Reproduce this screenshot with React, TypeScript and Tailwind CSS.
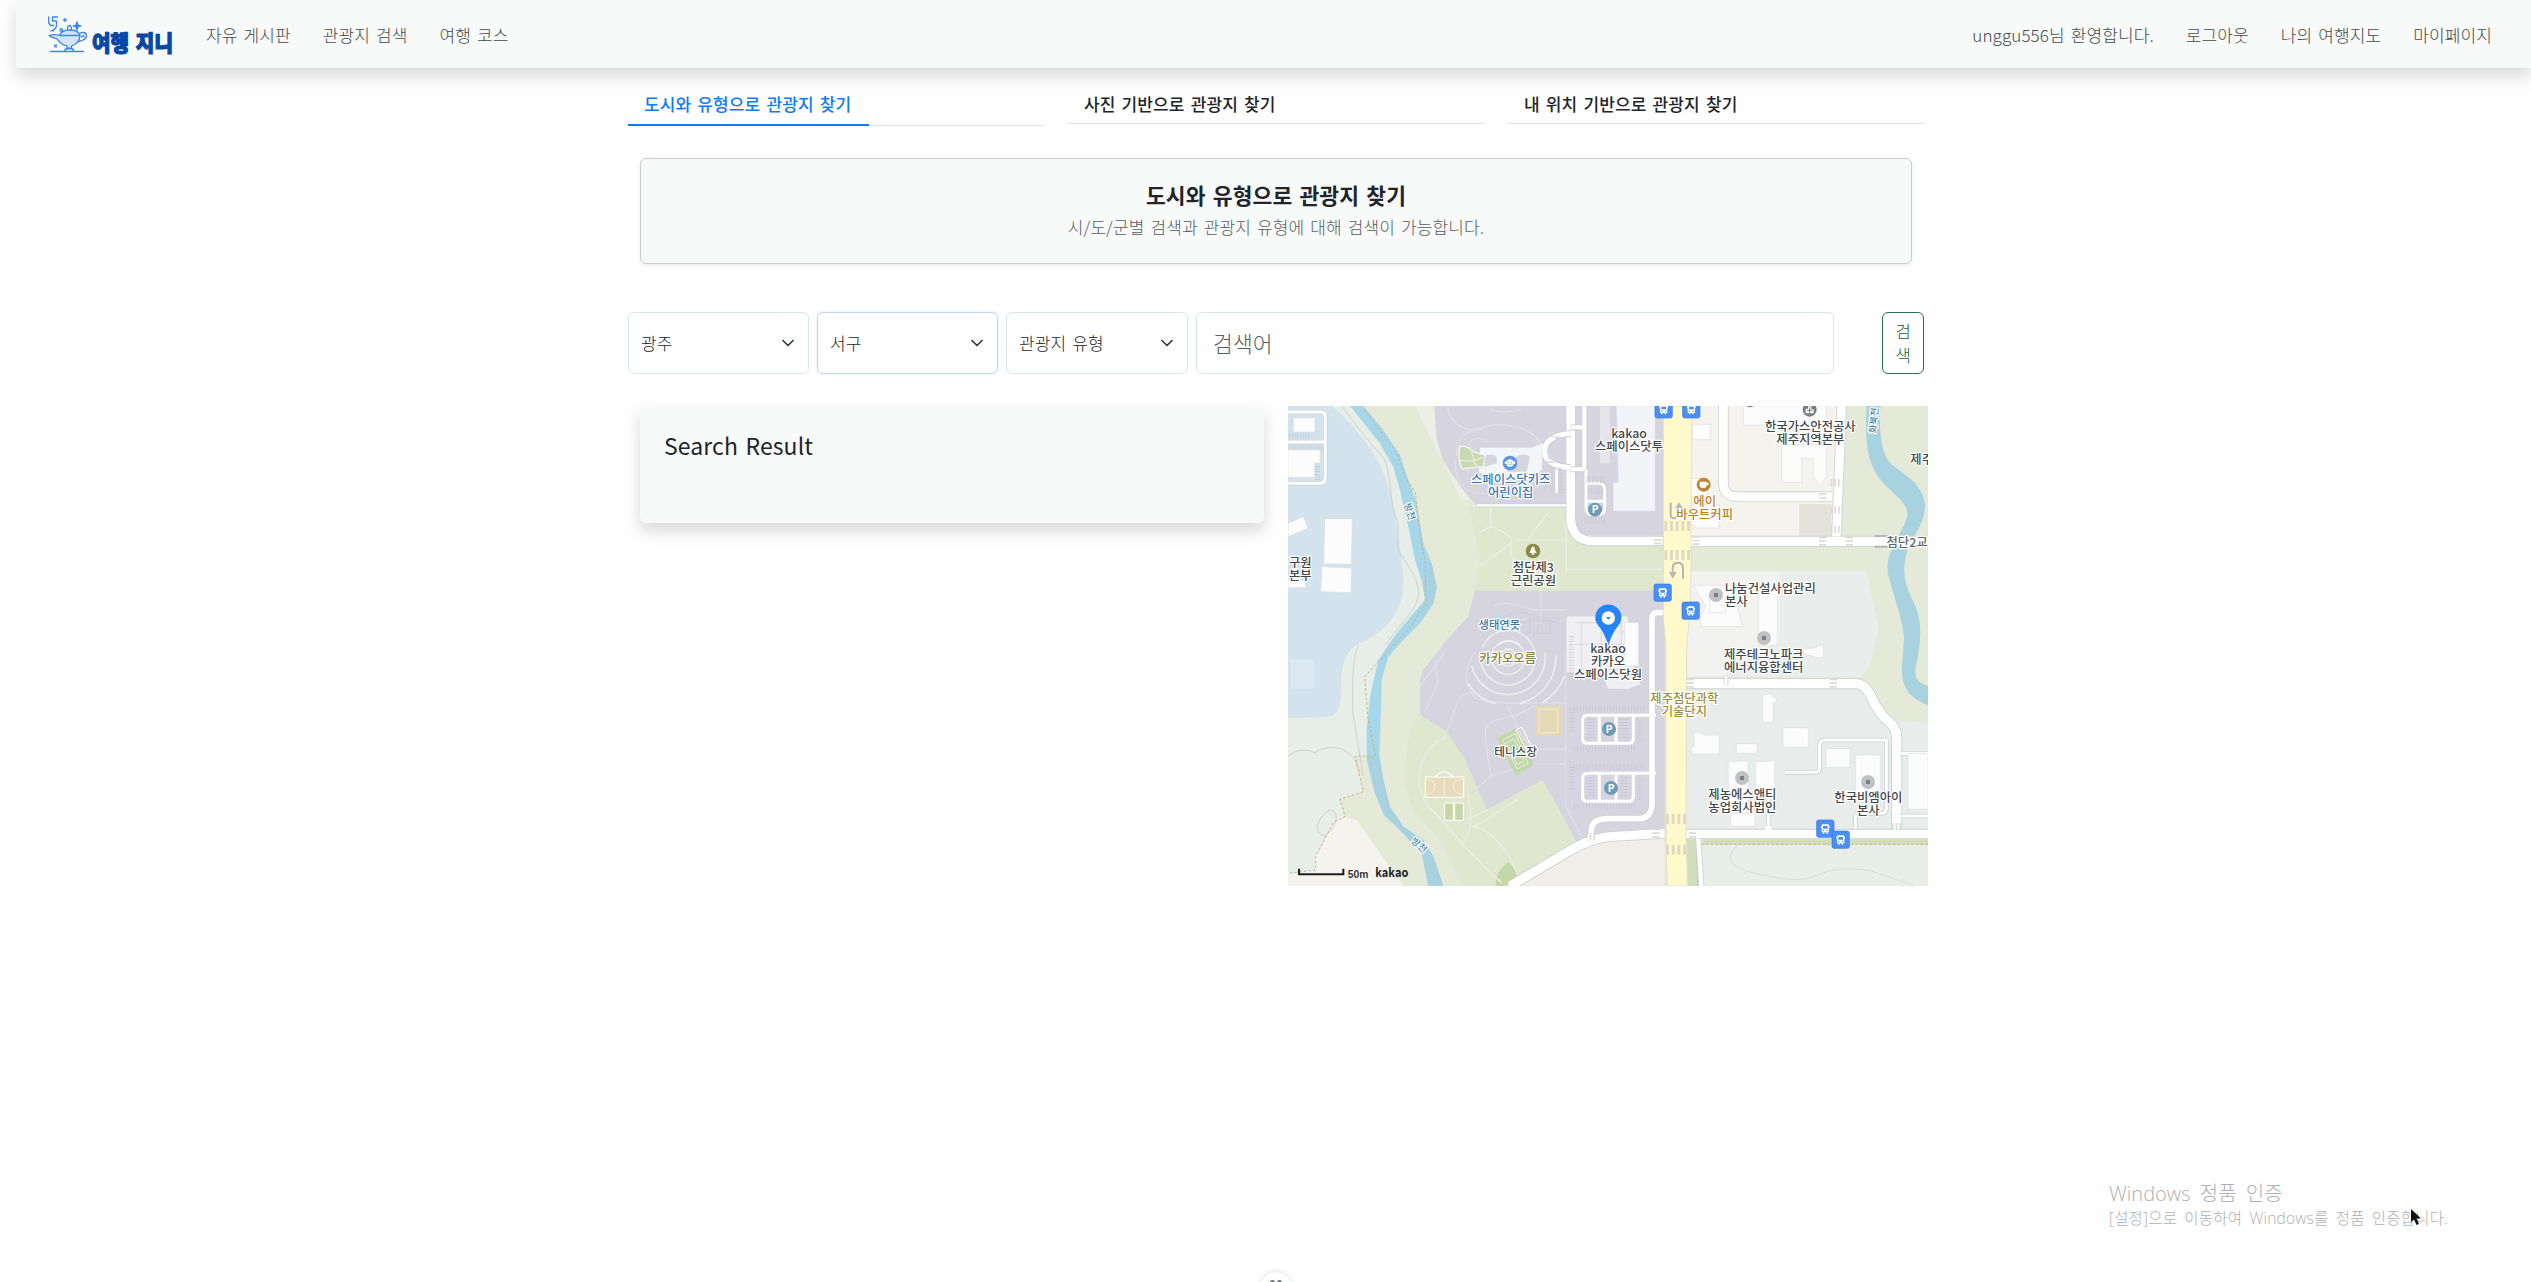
import type { ReactNode } from "react";

const NAV_LEFT = ["자유 게시판", "관광지 검색", "여행 코스"];
const NAV_RIGHT = ["unggu556님 환영합니다.", "로그아웃", "나의 여행지도", "마이페이지"];

function Logo() {
  return (
    <svg className="block h-[40px] w-[128px] overflow-visible" viewBox="0 0 128 40" fill="none">
      <g stroke="#3b86e8" strokeWidth="1.3" strokeLinecap="round" strokeLinejoin="round">
        <path d="M.7 2v6l2 2.500h3M9.500 2H4.500v4h4v5.500l-3.500 4.500M2.500 16l4-1.500" />
        <path d="M17 3.500v3M15.500 5h3" />
        <path d="M29 7l1 3 3 1-3 1-1 3-1-3-3-1 3-1z" fill="#3b86e8" />
        <circle cx="13.300" cy="15" r="1.300" />
        <path d="M6.500 30l2 2M8.500 30l-2 2" />
        <path d="M19.500 15c0-2 .5-4.500 2-4.500s2 2.500 2 4.500" />
        <path
          d="M1 20.500c5-1.500 8-1 11 0 0-3.500 5-5.500 9.500-5.500s9.500 1.500 10.500 5.500c0 6-5 9.500-8.500 10.500v2.500H19V31c-6-1-7.500-4-9.500-6.500C7.500 22.500 4 23.500 1 20.500z"
          fill="#d2e6fa"
        />
        <path d="M12 20.500h19.500M31 20c2-4 7.500-3 7.500 1 0 4-6 5-8.500 6M33.500 22c1-2 3-1.500 2.500 0" />
        <path d="M16.500 36.500c.5-2 2-3 3-3h3.500c1 0 2.500 1 3 3M2.500 36.500h33" />
      </g>
      <text
        x="44"
        y="35.500"
        textLength="81"
        lengthAdjust="spacingAndGlyphs"
        fill="#0748a6"
        stroke="#0748a6"
        strokeWidth="1.200"
        className="font-['Noto_Sans_CJK_KR',sans-serif] text-[22px] font-black"
      >
        여행 지니
      </text>
    </svg>
  );
}

function Chevron() {
  return (
    <svg className="h-[16px] w-[12px]" viewBox="0 0 12 16" fill="none" stroke="#343a40" strokeWidth="1.700">
      <path d="M1 5.500l5 5 5-5" strokeLinecap="round" strokeLinejoin="round" />
    </svg>
  );
}

function Label({ x, y, color = "#3f474b", size = 37, anchor = "middle", lines }: {
  x: number;
  y: number;
  color?: string;
  size?: number;
  anchor?: "start" | "middle";
  lines: string[];
}) {
  return (
    <text
      textAnchor={anchor}
      fill={color}
      stroke="#ffffff"
      strokeWidth="7"
      strokeLinejoin="round"
      paintOrder="stroke"
      fontSize={size}
      fontWeight={500}
    >
      {lines.map((l, i) => (
        <tspan key={l} x={x + 1} y={y + 1 + i * 39}>
          {l}
        </tspan>
      ))}
    </text>
  );
}

function Bus({ x, y }: { x: number; y: number }) {
  return (
    <g transform={`translate(${x} ${y})`}>
      <rect width="52" height="52" rx="6" fill="#4a8ff3" stroke="#3477dc" strokeWidth="2" />
      <path d="M16 13h20v4h3v6h-2v14h-4v4h-4v-4h-6v4h-4v-4h-4V23h-2v-6h3z" fill="#fff" />
      <path d="M19 18h14v8H19zM18 30h4v3h-4zM30 30h4v3h-4z" fill="#4a8ff3" />
    </g>
  );
}

function Parking({ x, y }: { x: number; y: number }) {
  return (
    <g>
      <circle cx={x} cy={y} r="21" fill="#6f9cb2" />
      <text x={x} y={y + 11} textAnchor="middle" fontSize="30" fontWeight="700" fill="#fff">
        P
      </text>
    </g>
  );
}

function Place({ x, y }: { x: number; y: number }) {
  return (
    <g>
      <circle cx={x} cy={y} r="21" fill="#bfc2c3" />
      <rect x={x - 6} y={y - 6} width="12" height="12" fill="#7b8083" />
    </g>
  );
}

function Road({ d, w, c = "#fefefe" }: { d: string; w: number; c?: string }) {
  return (
    <g fill="none">
      <path d={d} stroke="#cfcfd2" strokeWidth={w + 5} />
      <path d={d} stroke={c} strokeWidth={w} />
    </g>
  );
}

function Building({ d }: { d: string }) {
  return <path d={d} fill="#fcfcfc" stroke="#dcdfe0" strokeWidth="2" />;
}

function Quadrant({ x, y, children }: { x: number; y: number; children: ReactNode }) {
  return <g transform={`translate(${x} ${y})`}>{children}</g>;
}

function CarPark({ y }: { y: number }) {
  return (
    <g>
      <path d={`M852 ${y + 15}V${y + 80}M1056 ${y + 48}V${y + 116}`} stroke="#c6c4ce" strokeWidth="14" strokeDasharray="2 7" />
      <path d={`M858 ${y + 15}H1074M858 ${y + 134}H1046`} stroke="#c6c4ce" strokeWidth="16" strokeDasharray="2 7" />
      <path d={`M1104 ${y + 34}H900Q884 ${y + 34} 884 ${y + 48}V${y + 104}Q884 ${y + 118} 900 ${y + 118}H1020Q1036 ${y + 118} 1036 ${y + 104}V${y + 34}M934 ${y + 34}V${y + 118}M984 ${y + 34}V${y + 118}`} fill="none" stroke="#fff" strokeWidth="9" />
      <path d={`M908 ${y + 46}V${y + 108}M1008 ${y + 46}V${y + 108}`} stroke="#c6c4ce" strokeWidth="24" strokeDasharray="2 7" />
    </g>
  );
}

const LEFT_RIVER =
  "M186 0L216 37 276 112 316 182 336 252 361 362 381 462 404 532 412 582 376 622 326 682 301 717 271 762 246 872 236 972 236 1062 261 1162 288 1227 336 1272 401 1342 421 1440H466L436 1352 406 1302 346 1262 306 1202 286 1122 274 1047 279 902 281 822 301 752 346 702 396 652 436 592 446 542 431 472 406 412 386 292 361 222 336 147 286 72 226 0Z";
const RIGHT_RIVER =
  "M1736 0C1730 120 1736 180 1796 242C1846 285 1866 310 1856 335C1840 390 1790 440 1800 500C1806 540 1840 620 1848 690L1844 760C1836 830 1850 870 1920 897V840C1884 828 1876 810 1886 770C1900 700 1902 650 1882 600C1856 550 1838 500 1856 440C1880 380 1912 350 1911 295C1904 240 1860 210 1816 180C1776 150 1772 60 1778 0Z";

function KakaoMap() {
  return (
    <svg
      className="block h-[480px] w-[640px] shrink-0 font-['Noto_Sans_CJK_KR',sans-serif]"
      viewBox="0 0 1920 1440"
    >
      <rect width="1920" height="1440" fill="#e4e9d8" />
      {/* west bank */}
      <path d="M0 0H200L320 190 370 400 410 580 300 717 240 900 236 1052 202 1052 226 1157 156 1180 171 1232 83 1392 0 1404Z" fill="#e7eee8" />
      <path d="M0 0H131C205 65 280 150 308 265C332 380 350 500 345 555C335 640 270 690 206 717C160 745 160 800 158 870C156 920 140 932 110 933L0 937Z" fill="#d2e3ed" />
      <path d="M8 760H80V848H8Z" fill="#dce8f2" />
      <path d="M83 1352L136 1250 171 1232 206 1242 346 1440H0V1402L82 1392Z" fill="#f4f3ee" />
      <path d="M162 0L215 72 290 160C315 230 300 280 330 350V430C345 460 390 510 392 560C390 610 340 650 292 717M212 717C190 760 194 860 194 920C205 980 214 1040 226 1110M0 1050Q40 1020 80 1040Q150 1000 200 1060L215 1100M110 1290C70 1280 90 1230 126 1212C150 1215 150 1240 132 1270Z" fill="none" stroke="#ccd3ce" strokeWidth="3" />
      <path d="M381 0H439L446 100 466 165 546 282H520Z" fill="#edefe5" />
      {/* campus blocks */}
      <path d="M439 0H1126V388H880L835 300H566L516 240 466 165 446 100Z" fill="#d6d4df" />
      <path d="M541 302H835L880 414H1126V554H561L576 462 561 382Z" fill="#dfe7cf" />
      <path d="M561 554H1130V1284H1060L960 1280 871 1317 764 1122 596 1212 531 1062 476 977 396 927V822L406 792 476 702 541 632Z" fill="#d6d4df" />
      <path d="M396 927L476 977 531 1062 596 1212 764 1122 871 1317 666 1440H526L456 1302 376 1212 351 1132 360 1010 376 942Z" fill="#dfe7cf" />
      <path d="M660 1368Q685 1385 690 1415L650 1440H622Q620 1400 660 1368Z" fill="#c4d7a9" />
      <g fill="none" stroke="#e1dfe7" strokeWidth="4">
        <path d="M478 0C485 60 550 90 600 60M505 150C510 70 560 70 600 60S740 60 760 120M600 0Q620 30 700 10M500 160C500 260 560 270 620 260M540 200C520 100 560 80 600 110" />
        <path d="M396 840L470 740M410 920L450 830 440 760M476 977C510 900 500 860 560 860M560 740C520 800 530 850 570 880M570 880C660 900 700 890 833 890M833 740V1200L890 1310M660 900L700 990 740 1030H833M833 1074H720L610 1110C600 1060 590 1020 592 970C600 940 640 940 680 930L740 900M610 1110L540 1170" />
        <path d="M758 554V650L700 640M620 600Q640 580 740 612H833" />
      </g>
      <g fill="none" stroke="#e9eedd" strokeWidth="5">
        <path d="M608 300V360L575 380M608 360Q680 390 670 410T690 500M680 402H835M835 320V500M720 400L780 320M670 410L576 480M835 490H1120" />
        <path d="M476 990C380 1040 370 1150 430 1210S520 1320 640 1430M540 1160C560 1260 540 1290 520 1320M550 1260Q640 1280 690 1410M540 1240L600 1212M560 1262L690 1180" />
      </g>
      <path d={LEFT_RIVER} fill="#a5d6e9" />
      <path d="M404 532L431 472 446 542 436 592 396 652 412 582ZM236 1052H274L286 1122 306 1202 346 1262 406 1302 436 1352 466 1440H421L401 1342 336 1272 288 1227 261 1162Z" fill="#a8d2df" />
      <path d="M228 10L330 145 350 210 382 260 395 380 412 470V590L370 660 230 812 240 940 264 1050H202L226 1157 156 1180 171 1232 136 1250 83 1352V1392L0 1402" fill="none" stroke="#cfb278" strokeWidth="3" strokeDasharray="8 6" />

      {/* east side */}
      <path d="M1208 0H1660L1640 394H1208Z" fill="#f4f3ee" />
      <path d="M1534 294H1630V392H1534Z" fill="#e2e2da" />
      <path d="M1204 496H1476V812H1196V640Z" fill="#f2f2f0" />
      <path d="M1476 496H1736L1771 662 1746 782 1720 812H1300L1476 700Z" fill="#eaedec" />
      <path d="M1194 850H1720L1810 960 1840 945 1920 952V1270H1194Z" fill="#e8edec" />
      <path d={RIGHT_RIVER} fill="#a8d2df" />
      <path d="M1130 1284V1440H666L871 1330 960 1290Z" fill="#efefe8" />
      <path d="M1194 1290H1920V1440H1194Z" fill="#e8efe8" />
      <path d="M1196 1296H1225L1236 1440H1200ZM1244 1300H1920V1316H1244Z" fill="#d1debd" />
      <path d="M1240 1315H1920M1225 1310L1230 1440" fill="none" stroke="#cfb278" strokeWidth="3" strokeDasharray="8 6" />
      <path d="M1350 1318C1290 1370 1350 1400 1500 1420C1600 1430 1590 1370 1750 1395L1880 1440" fill="none" stroke="#d6dcd6" strokeWidth="3" />

      {/* roads */}
      <Road d="M1124 405H914Q848 405 848 330V0" w={26} />
      <Road d="M889 0V190H848M848 64H889" w={12} />
      <Road d="M566 298H836" w={7} />
      <Road d="M848 82Q770 90 770 135T848 185" w={15} />
      <path d="M800 92h20v24h-14zM806 130h14v30h-20z" fill="#d6d4df" />
      <path d="M806 190V260" stroke="#fff" strokeWidth="8" />
      <path d="M792 185V262M818 185V262" stroke="#c6c4ce" strokeWidth="14" strokeDasharray="2 6" />
      <Road d="M894 232H930Q950 232 950 250V306Q950 326 930 326H914Q894 326 894 306V190M894 286H950" w={9} />
      <path d="M900 256H942M896 222H952M892 344H950" stroke="#c6c4ce" strokeWidth="22" strokeDasharray="2 6" />
      <Road d="M1208 406H1920" w={28} />
      <Road d="M1306 0V230Q1306 272 1350 272H1632" w={27} />
      <Road d="M1661 0L1645 392" w={26} />
      <Road d="M666 1440L840 1337Q900 1300 960 1292L1130 1282" w={27} />
      <Road d="M1130 620H1106Q1092 620 1092 640V1190Q1092 1238 1050 1238H960Q910 1238 910 1275V1310" w={17} />
      <Road d="M1194 833H1700Q1730 833 1748 868Q1770 920 1800 945Q1826 965 1826 995V1270" w={28} />
      <Road d="M1314 810V838M1441 1170V1270M1702 1270V1235Q1702 1222 1720 1222H1780Q1795 1222 1795 1205V1002M1492 1099H1580Q1595 1099 1595 1085V1018Q1595 1002 1612 1002H1800M1838 1042H1920M1838 1230H1920" w={9} />
      <Road d="M1194 1284H1920" w={26} />
      <Road d="M1231 1298L1240 1440" w={13} />
      <path d="M910 1284V1312M1826 1250V1290M1441 1260V1280" stroke="#fefefe" strokeWidth="20" />
      <path d="M1126 0H1211L1208 600 1196 720 1194 1300 1198 1440H1138L1134 1300V720L1126 640Z" fill="#fff9cc" stroke="#d9d6c4" strokeWidth="2" />
      <g stroke="#dedbbf" strokeWidth="30" strokeDasharray="9 8">
        <path d="M1129 360H1208M1129 447H1208" />
        <path d="M1134 1239H1194M1134 1331H1194" />
      </g>
      <g stroke="#dcdcd6" strokeWidth="22" strokeDasharray="5 6">
        <path d="M1109 388V418M1224 390V420M1604 262V292M1604 392V420M1684 392V420M1104 1268V1298M1213 1268V1298M1206 818V848M1636 818V848M788 78V100M788 155V175" />
        <path d="M1628 230H1662M1628 312H1662M1628 370H1662M1812 1262H1844M905 1292H925" />
      </g>
      <g stroke="#b5b5b8" strokeWidth="6" fill="none">
        <path d="M1148 290V325Q1148 340 1162 336Q1172 330 1172 300M1164 308L1173 294 1182 308M1185 518V485Q1185 470 1170 470T1154 485V505M1146 498L1154 512 1163 498" />
        <path d="M1760 390H1800M1760 422H1810" />
      </g>

      {/* north-west quadrant details */}
      <Quadrant x={-24} y={-18}>
        <path d="M24 36H122Q136 36 136 50V232Q136 250 118 250H24M24 126H136" fill="none" stroke="#cfd3d6" strokeWidth="14" />
        <path d="M24 36H122Q136 36 136 50V232Q136 250 118 250H24M24 126H136" fill="none" stroke="#fdfdfd" strokeWidth="9" />
        <path d="M28 108H92M28 142H128M112 190V242" stroke="#b9c8d2" strokeWidth="16" strokeDasharray="2 6" />
        <Building d="M40 54H105V96H40ZM24 150H120V190H103V232H24ZM24 370L70 350 84 385 24 410ZM134 356H217L214 492H131ZM126 500L215 504 213 578 122 575ZM24 540H76V563H24Z" />
        <path d="M600 143H752L790 130 785 210 745 240 597 218Z" fill="#f4f5f8" />
        <path d="M600 170Q660 150 650 190L600 205Z" fill="#d6d4df" />
        <path d="M690 190Q720 150 750 170L740 215H680Z" fill="#d6d4df" />
        <path d="M540 140Q560 135 580 155L616 165 610 200 545 206Q534 180 538 145Z" fill="#c9dab2" stroke="#f4f5f2" strokeWidth="4" />
        <path d="M540 180Q580 190 610 170M570 140L590 205" stroke="#e5ead9" strokeWidth="4" fill="none" />
        <circle cx="690" cy="189" r="22" fill="#5a97dc" />
        <circle cx="690" cy="189" r="11" fill="#fff" />
        <circle cx="678" cy="188" r="4" fill="#fff" />
        <circle cx="702" cy="188" r="4" fill="#fff" />
        <circle cx="686" cy="187" r="2" fill="#5a97dc" />
        <circle cx="694" cy="187" r="2" fill="#5a97dc" />
        <path d="M685 192q5 5 10 0" stroke="#5a97dc" strokeWidth="2" fill="none" />
        <Label x={691} y={251} color="#3a78b5" lines={["스페이스닷키즈", "어린이집"]} />
        <circle cx="759" cy="453" r="22" fill="#8b8c48" />
        <path d="M759 439q6 4 6 11l5 9h-8v5h-6v-5h-8l5-9q0-7 6-11z" fill="#fff" />
        <Label x={759} y={516} lines={["첨단제3", "근린공원"]} />
        <Label x={60} y={500} lines={["구원", "본부"]} />
        <g transform="rotate(72 391 333)">
          <Label x={391} y={344} color="#4686ab" size={28} lines={["방천"]} />
        </g>
        <g fill="none" stroke="#c9cad6" strokeWidth="2">
          <path d="M660 660q40-35 80-20t100 15M670 690q80-50 170-20M690 640v50M720 640l-5 60M750 640v60M780 650l-10 60M810 655v50M700 665h130M730 700h80" />
        </g>
        <path d="M645 650q25-12 25 15t-20 20q-20-15-5-35z" fill="#b4dbe8" />
        <Label x={657} y={687} color="#3a78b5" size={34} lines={["생태연못"]} />
      </Quadrant>

      {/* amphitheatre */}
      <g fill="none" stroke="#f2f2ea" strokeWidth="4">
        <circle cx="660" cy="755" r="26" />
        <circle cx="660" cy="755" r="50" />
        <path d="M578 754a82 82 0 1 0 6-30M551 780a112 112 0 0 0 220-40M540 832a130 130 0 0 0 85 60M696 892a140 140 0 0 0 107-145M764 890a170 170 0 0 0 66-80M625 720q35-28 72-4" />
      </g>

      {/* main building */}
      <path d="M834 630H1020L1040 800 1060 835 1020 850H960L940 800H834Z" fill="#f0eff3" stroke="#d0ced6" strokeWidth="2" />
      <path d="M860 650H1000V790H880V650M940 650V790M860 715H1060M1040 650V780M1000 680q30-20 60 0M1000 740q30 30 60 0" fill="none" stroke="#d8d7dd" strokeWidth="3" />
      <path d="M850 690V820" stroke="#c8c6ce" strokeWidth="14" strokeDasharray="2 6" />
      <path d="M1010 650H1052V780H1010Z" fill="#fcfcfc" stroke="#dcdfe0" strokeWidth="2" />

      {/* north-east quadrant details */}
      <Quadrant x={936} y={-18}>
        <path d="M50 18H165V333H40V248H55Z" fill="#f3f4f8" stroke="#e2e2ea" strokeWidth="2" />
        <path d="M0 20H30V190H0Z" fill="#e6e5ec" />
        <Building d="M277 73H332V119H277ZM430 18H680V75H430ZM545 135H680V230L660 258 640 230V175H605V247H545ZM274 235H320V290H274ZM274 315H358V384H290L274 370Z" />
        <Building d="M280 556H395L427 680H303L300 650 318 620ZM476 570H532V735H476Z" />
        <path d="M328 580V638H376V590" fill="none" stroke="#dcdfe0" strokeWidth="2" />
        <Bus x={165} y={2} />
        <Bus x={248} y={2} />
        <Bus x={162} y={552} />
        <Bus x={246} y={606} />
        <circle cx="450" cy="8" r="14" fill="#777d80" />
        <circle cx="629" cy="29" r="21" fill="#777d80" />
        <path d="M617 40V26h7v-7h10v9h7v12z" fill="#fff" />
        <path d="M621 31h16M629 22v18" stroke="#777d80" strokeWidth="3" />
        <circle cx="311" cy="254" r="21" fill="#ba8636" />
        <path d="M299 245h21v11q0 8-8 8h-5q-8 0-8-8zM320 248h6v7h-6" fill="#fff" />
        <Label x={86} y={112} lines={["kakao", "스페이스닷투"]} />
        <Label x={630} y={92} lines={["한국가스안전공사", "제주지역본부"]} />
        <Label x={313} y={316} color="#b97f2a" lines={["에이", "바우트커피"]} />
        <Label x={930} y={191} anchor="start" lines={["제주"]} />
        <Label x={920} y={440} color="#62696c" lines={["첨단2교"]} />
        <g transform="rotate(-85 820 62)">
          <Label x={820} y={72} color="#4a7f98" size={28} lines={["화북천"]} />
        </g>
        <Place x={348} y={585} />
        <Label x={374} y={578} anchor="start" lines={["나눔건설사업관리", "본사"]} />
        <Place x={492} y={714} />
      </Quadrant>

      {/* south-west quadrant details */}
      <Quadrant x={-24} y={702}>
        <rect x="766" y="197" width="78" height="91" fill="#e5d9b8" />
        <rect x="777" y="208" width="56" height="70" fill="none" stroke="#f2ead2" strokeWidth="3" />
        <path d="M650 295L710 264 762 375 708 406Z" fill="#c4d7a9" />
        <path d="M668 300L706 281 744 368 712 387ZM680 308L703 296 732 362 712 374Z" fill="none" stroke="#e8eedd" strokeWidth="3" />
        <path d="M708 270L725 261 757 325 742 335Z" fill="none" stroke="#fff" strokeWidth="3" />
        <Label x={706} y={347} size={35} lines={["테니스장"]} />
        <path d="M465 411Q492 380 520 411" fill="none" stroke="#fff" strokeWidth="4" />
        <rect x="436" y="411" width="115" height="61" fill="#e7dbbb" stroke="#fff" strokeWidth="3" />
        <path d="M493 411V472M438 418Q465 418 465 440T438 462M549 418Q520 418 520 440T549 462" fill="none" stroke="#f7f2e0" strokeWidth="3" />
        <path d="M494 489H520V541H494ZM524 489H550V541H524Z" fill="#c4d7a9" stroke="#fff" strokeWidth="3" />
        <Label x={682} y={67} color="#85843a" lines={["카카오오름"]} />
        <g transform="rotate(42 418 613)">
          <Label x={418} y={624} color="#4686ab" size={28} lines={["방천"]} />
        </g>
      </Quadrant>

      <CarPark y={894} />
      <CarPark y={1068} />
      <Parking x={921} y={311} />
      <Parking x={963} y={969} />
      <Parking x={969} y={1146} />

      {/* south-east quadrant details */}
      <Quadrant x={936} y={702}>
        <Building d="M488 166L515 160 518 172H528V188H519V247H488ZM549 263H625V322H549ZM409 311H471V340H409ZM281 277L311 280V285H358V342H275V320H284ZM677 326H750V382H677ZM767 345H841V470H767ZM385 365L444 362V520H385ZM466 365L524 362V480L466 470ZM392 520H465V559H392ZM924 340H984V508H924ZM610 25H640L670 14V52H648L610 40Z" />
        <Label x={490} y={55} lines={["제주테크노파크", "에너지융합센터"]} />
        <Label x={252} y={188} color="#9a8f3a" lines={["제주첨단과학", "기술단지"]} />
        <Place x={426} y={414} />
        <Label x={426} y={477} lines={["제농에스앤티", "농업회사법인"]} />
        <Place x={804} y={426} />
        <Label x={804} y={485} lines={["한국비엠아이", "본사"]} />
        <Bus x={650} y={540} />
        <Bus x={696} y={573} />
      </Quadrant>

      <path d="M961 720Q950 680 930 658A39 39 0 1 1 992 658Q972 680 961 720Z" fill="#2684fb" />
      <circle cx="961" cy="636" r="20" fill="#fff" />
      <path d="M954 633h14l-7 8z" fill="#2684fb" />
      <Label x={959} y={739} lines={["kakao", "카카오", "스페이스닷원"]} />

      <path d="M33 1388V1405H166V1388" fill="none" stroke="#1c1c1c" strokeWidth="6" />
      <text x="179" y="1416" fontSize="30" fontWeight="700" fill="#333" stroke="#fff" strokeWidth="4" paintOrder="stroke" textLength="62" lengthAdjust="spacingAndGlyphs" className="font-['Liberation_Sans',sans-serif]">
        50m
      </text>
      <text x="262" y="1412" fontSize="38" fontWeight="700" fill="#222" textLength="99" lengthAdjust="spacingAndGlyphs">
        kakao
      </text>
    </svg>
  );
}

function Select({ label, focused, width }: { label: string; focused?: boolean; width: string }) {
  return (
    <div
      className={`flex h-[62px] items-center justify-between rounded-md border pr-[14px] pl-[12px] ${width} ${
        focused ? "border-[#bdd7f3] shadow-[0_0_2px_#cfe3f8]" : "border-[#dee5ea]"
      }`}
    >
      <span>{label}</span>
      <Chevron />
    </div>
  );
}

export default function App() {
  return (
    <div className="relative flex h-[1282px] w-[2531px] flex-col overflow-hidden bg-[#fefefe] font-['Noto_Sans_CJK_KR',sans-serif] text-[17px] leading-[24px] font-light tracking-[0.1px] text-[#212529] [word-spacing:2.2px]">
      <nav className="ml-4 flex h-[68px] shrink-0 items-center bg-[#f8faf9] pr-[39px] pl-8 text-[#43484c] shadow-[0_8px_16px_rgba(0,0,0,0.15)]">
        <div className="pt-[2px]">
          <Logo />
        </div>
        <div className="ml-[30px] flex gap-[32px] pt-[2px]">
          {NAV_LEFT.map((t) => (
            <a key={t}>{t}</a>
          ))}
        </div>
        <div className="ml-auto flex gap-[32px] pt-[2px]">
          {NAV_RIGHT.map((t) => (
            <a key={t}>{t}</a>
          ))}
        </div>
      </nav>

      <main className="ml-[628px] w-[1300px]">
        <div className="mt-4 flex h-[42px] w-[1296px] items-start gap-6 font-medium">
          <div className="flex h-[42px] w-[416px] items-end border-b border-[#dee2e6]">
            <div className="-mb-px h-[42px] w-[241px] border-b-2 border-[#0a7cff] pt-[8px] pl-4 whitespace-nowrap text-[#0a7cff]">
              도시와 유형으로 관광지 찾기
            </div>
          </div>
          <div className="h-[40px] w-[416px] border-b border-[#dee2e6] pt-[8px] pl-4">사진 기반으로 관광지 찾기</div>
          <div className="h-[40px] w-[416px] border-b border-[#dee2e6] pt-[8px] pl-4">내 위치 기반으로 관광지 찾기</div>
        </div>

        <section className="mt-8 ml-3 flex h-[106px] w-[1272px] flex-col items-center rounded-md border border-[#c9cdcb] bg-[#f8faf9] pt-[24px] shadow-[0_2px_4px_rgba(0,0,0,0.075)]">
          <h2 className="text-[21.5px] leading-[24px] font-semibold">도시와 유형으로 관광지 찾기</h2>
          <p className="mt-[8px] text-[#555c62]">시/도/군별 검색과 관광지 유형에 대해 검색이 가능합니다.</p>
        </section>

        <div className="mt-12 flex gap-2">
          <Select label="광주" width="w-[181px]" />
          <Select label="서구" width="w-[181px]" focused />
          <Select label="관광지 유형" width="w-[182px]" />
          <div className="flex h-[62px] w-[638px] items-center rounded-md border border-[#dee5ea] pl-4 text-[21.5px] text-[#555c62]">
            검색어
          </div>
          <button className="ml-[40px] flex h-[62px] w-[42px] flex-col items-center justify-center rounded-md border border-[#2b6f59] leading-[24px] text-[#1b5c47]">
            <span>검</span>
            <span>색</span>
          </button>
        </div>

        <div className="mt-8 ml-3 flex items-start gap-6">
          <section className="h-[117px] w-[624px] rounded-md bg-[#f8faf9] pt-[24px] pl-6 shadow-[0_8px_16px_rgba(0,0,0,0.15)]">
            <h3 className="text-[23px] leading-[30px] font-normal">Search Result</h3>
          </section>
          <div className="tracking-normal [word-spacing:0]">
            <KakaoMap />
          </div>
        </div>
      </main>

      <div className="absolute top-[1180px] left-[2109px] font-['Open_Sans','Noto_Sans_CJK_KR',sans-serif] tracking-normal whitespace-nowrap text-[#b0b0b0]">
        <div className="text-[20px] leading-[28px] [word-spacing:4px]">Windows 정품 인증</div>
        <div className="text-[15.5px] leading-[20px] tracking-[0.2px] [word-spacing:3px]">
          [설정]으로 이동하여 Windows를 정품 인증합니다.
        </div>
      </div>
      <svg className="absolute top-[1209px] left-[2411px] h-[17px] w-[11px]" viewBox="0 0 11 17">
        <path d="M0 0V13L3 10.500 5.500 16 8 15 5.500 9.500H10Z" fill="#111" />
      </svg>
      <div className="absolute top-[1271px] left-[1260px] flex h-[32px] w-[32px] justify-center gap-[2px] rounded-full border border-[#f0f0f0] bg-white pt-[8px] shadow-[0_0_5px_rgba(0,0,0,0.1)]">
        <span className="h-[6px] w-[5px] rounded-t bg-[#6c7377]" />
        <span className="h-[6px] w-[5px] rounded-t bg-[#6c7377]" />
      </div>
    </div>
  );
}
